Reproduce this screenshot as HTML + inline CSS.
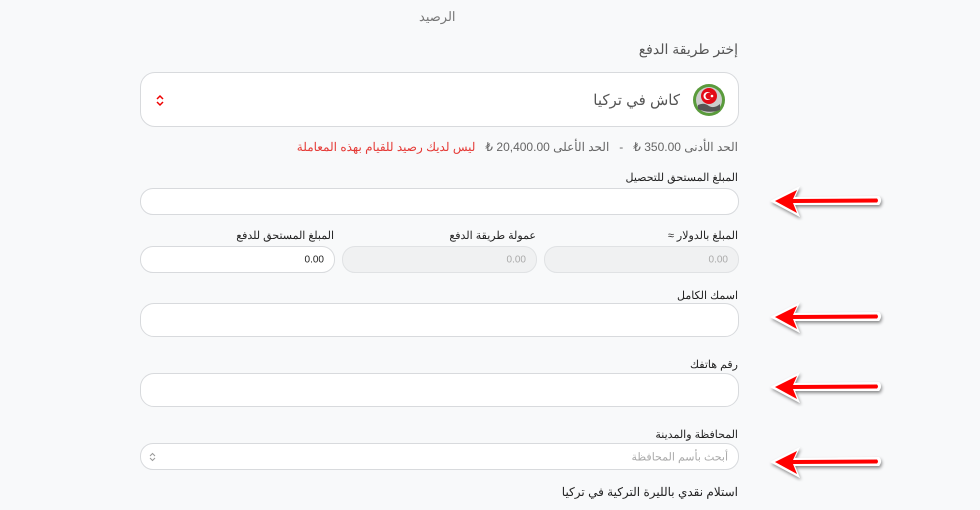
<!DOCTYPE html>
<html><head><meta charset="utf-8"><style>
body{margin:0;width:980px;height:510px;background:#f8f9fa;font-family:"Liberation Sans","Noto Sans CJK SC",sans-serif;position:relative;overflow:hidden}
.a{position:absolute;white-space:nowrap;direction:rtl}
.r{right:242px}
.box{position:absolute;background:#fff;border:1px solid #d8dadd;box-sizing:border-box}
.lbl{font-size:11px;color:#222}
.dis{background:#f0f1f2;border-color:#e0e2e4}
.v{position:absolute;right:10px;top:50%;transform:translateY(-50%);font-size:10px}
svg.ar{position:absolute;left:764px;width:122px;height:44px}
</style></head><body>
<div class="a" style="left:419px;top:9px;font-size:13px;color:#777">الرصيد</div>
<div class="a r" style="top:41px;font-size:14px;color:#555">إختر طريقة الدفع</div>
<div class="box" style="left:140px;top:72px;width:599px;height:55px;border-radius:15px">
 <div class="a" style="right:58px;top:18px;font-size:15px;color:#555">كاش في تركيا</div>
 <svg style="position:absolute;left:551px;top:10px" width="34" height="34" viewBox="0 0 34 34"><circle cx="17" cy="17" r="16" fill="#5a9b3c"/><circle cx="17" cy="17" r="13" fill="#ccc"/><path d="M6 22 Q12 19 17 23 Q22 26 28 21 L28 27 Q17 31 6 26Z" fill="#555"/><circle cx="17" cy="13" r="8" fill="#e30a17"/><circle cx="15.5" cy="13" r="4" fill="#fff"/><circle cx="16.7" cy="13" r="3.2" fill="#e30a17"/><circle cx="20" cy="13" r="1.3" fill="#fff"/></svg>
 <svg style="position:absolute;left:15px;top:21px" width="8" height="13" viewBox="0 0 8 13"><path d="M1 5 L4 2 L7 5 M1 8 L4 11 L7 8" stroke="#e00" stroke-width="1.5" fill="none"/></svg>
</div>
<div class="a r" style="top:140px;font-size:12px;color:#666;letter-spacing:-0.1px">الحد الأدنى 350.00 ₺ &nbsp; - &nbsp; الحد الأعلى 20,400.00 ₺ &nbsp; <span style="color:#e53935">ليس لديك رصيد للقيام بهذه المعاملة</span></div>
<div class="a r lbl" style="top:171px">المبلغ المستحق للتحصيل</div>
<div class="box" style="left:140px;top:188px;width:599px;height:27px;border-radius:13px"></div>
<div class="a lbl" style="right:242px;top:229px">المبلغ بالدولار ≈</div>
<div class="a lbl" style="right:444px;top:229px">عمولة طريقة الدفع</div>
<div class="a lbl" style="right:646px;top:229px">المبلغ المستحق للدفع</div>
<div class="box dis" style="left:544px;top:246px;width:195px;height:27px;border-radius:13px"><span class="v" style="color:#aaa">0.00</span></div>
<div class="box dis" style="left:342px;top:246px;width:195px;height:27px;border-radius:13px"><span class="v" style="color:#aaa">0.00</span></div>
<div class="box" style="left:140px;top:246px;width:195px;height:27px;border-radius:13px"><span class="v" style="color:#222">0.00</span></div>
<div class="a r lbl" style="top:289px">اسمك الكامل</div>
<div class="box" style="left:140px;top:303px;width:599px;height:34px;border-radius:14px"></div>
<div class="a r lbl" style="top:358px">رقم هاتفك</div>
<div class="box" style="left:140px;top:373px;width:599px;height:34px;border-radius:14px"></div>
<div class="a r lbl" style="top:428px">المحافظة والمدينة</div>
<div class="box" style="left:140px;top:443px;width:599px;height:27px;border-radius:13px">
 <span class="v" style="color:#aaa;font-size:11px">أبحث بأسم المحافظة</span>
 <svg style="position:absolute;left:8px;top:8px" width="7" height="10" viewBox="0 0 7 10"><path d="M1 4 L3.5 1.5 L6 4 M1 6 L3.5 8.5 L6 6" stroke="#999" stroke-width="1" fill="none"/></svg>
</div>
<div class="a r" style="top:485px;font-size:12px;color:#222">استلام نقدي بالليرة التركية في تركيا</div>
<svg class="ar" style="top:180px" viewBox="0 0 122 44"><defs><filter id="s"><feDropShadow dx="1" dy="2" stdDeviation="1.5" flood-opacity=".45"/></filter></defs><g filter="url(#s)"><path d="M6 21 L36 6 L31 17 L115 16 Q119 20 115 25 L31 25 L36 37Z" fill="#fff"/><path d="M11 21 L33 10 L29 19 L113 18.5 Q115 20.5 113 22.5 L29 23 L33 33Z" fill="#f00"/></g></svg>
<svg class="ar" style="top:296px" viewBox="0 0 122 44"><g filter="url(#s)"><path d="M6 21 L36 6 L31 17 L115 16 Q119 20 115 25 L31 25 L36 37Z" fill="#fff"/><path d="M11 21 L33 10 L29 19 L113 18.5 Q115 20.5 113 22.5 L29 23 L33 33Z" fill="#f00"/></g></svg>
<svg class="ar" style="top:366px" viewBox="0 0 122 44"><g filter="url(#s)"><path d="M6 21 L36 6 L31 17 L115 16 Q119 20 115 25 L31 25 L36 37Z" fill="#fff"/><path d="M11 21 L33 10 L29 19 L113 18.5 Q115 20.5 113 22.5 L29 23 L33 33Z" fill="#f00"/></g></svg>
<svg class="ar" style="top:441px" viewBox="0 0 122 44"><g filter="url(#s)"><path d="M6 21 L36 6 L31 17 L115 16 Q119 20 115 25 L31 25 L36 37Z" fill="#fff"/><path d="M11 21 L33 10 L29 19 L113 18.5 Q115 20.5 113 22.5 L29 23 L33 33Z" fill="#f00"/></g></svg>
</body></html>
